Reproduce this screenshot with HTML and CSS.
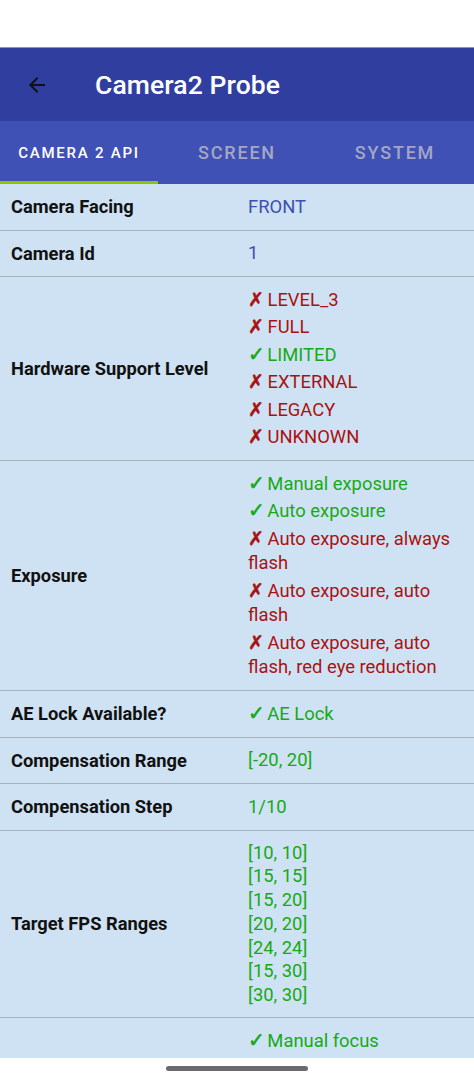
FILE: index.html
```html
<!DOCTYPE html>
<html>
<head>
<meta charset="utf-8">
<link rel="stylesheet" href="styles.css">
</head>
<body>
<div class="screen">
  <div class="status"></div>
  <header class="appbar">
    <svg class="back" width="24" height="24" viewBox="0 0 24 24"><path d="M20 11H7.83l5.59-5.59L12 4l-8 8 8 8 1.41-1.41L7.83 13H20v-2z" fill="#111"/></svg>
    <h1 class="title">Camera2 Probe</h1>
  </header>
  <nav class="tabs">
    <div class="tab active">CAMERA 2 API</div>
    <div class="tab">SCREEN</div>
    <div class="tab">SYSTEM</div>
  </nav>
  <main class="content">
    <div class="row">
      <div class="label">Camera Facing</div>
      <div class="value"><div class="item blue">FRONT</div></div>
    </div>
    <div class="row">
      <div class="label">Camera Id</div>
      <div class="value"><div class="item blue">1</div></div>
    </div>
    <div class="row">
      <div class="label">Hardware Support Level</div>
      <div class="value">
        <div class="item no"><span class="mk">✗</span> LEVEL_3</div>
        <div class="item no"><span class="mk">✗</span> FULL</div>
        <div class="item yes"><span class="mk">✓</span> LIMITED</div>
        <div class="item no"><span class="mk">✗</span> EXTERNAL</div>
        <div class="item no"><span class="mk">✗</span> LEGACY</div>
        <div class="item no"><span class="mk">✗</span> UNKNOWN</div>
      </div>
    </div>
    <div class="row">
      <div class="label">Exposure</div>
      <div class="value">
        <div class="item yes"><span class="mk">✓</span> Manual exposure</div>
        <div class="item yes"><span class="mk">✓</span> Auto exposure</div>
        <div class="item no"><span class="mk">✗</span> Auto exposure, always flash</div>
        <div class="item no"><span class="mk">✗</span> Auto exposure, auto flash</div>
        <div class="item no"><span class="mk">✗</span> Auto exposure, auto flash, red eye reduction</div>
      </div>
    </div>
    <div class="row">
      <div class="label">AE Lock Available?</div>
      <div class="value"><div class="item yes"><span class="mk">✓</span> AE Lock</div></div>
    </div>
    <div class="row">
      <div class="label">Compensation Range</div>
      <div class="value"><div class="item yes">[-20, 20]</div></div>
    </div>
    <div class="row">
      <div class="label">Compensation Step</div>
      <div class="value"><div class="item yes">1/10</div></div>
    </div>
    <div class="row fps">
      <div class="label">Target FPS Ranges</div>
      <div class="value">
        <div class="lines yes">[10, 10]<br>[15, 15]<br>[15, 20]<br>[20, 20]<br>[24, 24]<br>[15, 30]<br>[30, 30]</div>
      </div>
    </div>
    <div class="row">
      <div class="label"></div>
      <div class="value"><div class="item yes"><span class="mk">✓</span> Manual focus</div></div>
    </div>
  </main>
  <div class="navbar"><div class="pill"></div></div>
</div>
</body>
</html>
```

FILE: styles.css
```css
html, body {
  margin: 0;
  padding: 0;
  background: #ffffff;
}
.screen {
  width: 474px;
  height: 1080px;
  display: flex;
  flex-direction: column;
  overflow: hidden;
  font-family: Roboto, "Liberation Sans", sans-serif;
}
.status {
  height: 47px;
  flex: none;
  background: #ffffff;
}
.appbar {
  height: 74px;
  flex: none;
  background: #303f9f;
  border-top: 1px solid #8893c6;
  box-sizing: border-box;
  display: flex;
  align-items: center;
  padding-left: 25px;
}
.back {
  width: 24px;
  height: 24px;
  flex: none;
}
.title {
  margin: 0 0 0 46px;
  font-size: 26.5px;
  font-weight: 500;
  color: #ffffff;
  letter-spacing: 0.1px;
}
.tabs {
  height: 63px;
  flex: none;
  background: #3f51b5;
  display: grid;
  grid-template-columns: 1fr 1fr 1fr;
}
.tab {
  display: flex;
  align-items: center;
  justify-content: center;
  font-size: 18px;
  font-weight: 500;
  letter-spacing: 1.8px;
  color: #a4a6c4;
  box-sizing: border-box;
  padding-bottom: 1px;
}
.tab.active {
  font-size: 15px;
  letter-spacing: 1.75px;
  color: #ffffff;
  border-bottom: 3px solid #8bc400;
  padding-top: 3px;
  padding-bottom: 0;
}
.content {
  flex: 1;
  background: #cfe2f3;
  overflow: hidden;
}
.row {
  display: grid;
  grid-template-columns: 237px 237px;
  border-bottom: 1px solid #a9b1b9;
  padding: 9px 0;
}
.row.fps {
  padding: 10px 0;
}
.label {
  padding-left: 11px;
  font-size: 18.3px;
  font-weight: 700;
  color: #111111;
  display: flex;
  align-items: center;
}
.value {
  padding: 0 8px 0 11px;
  font-size: 18.4px;
  line-height: 24.5px;
}
.item {
  padding: 1.5px 0;
}
.lines {
  line-height: 23.8px;
}
.blue { color: #3f4fae; }
.yes { color: #16aa16; }
.no { color: #a81212; }
.mk {
  display: inline-block;
  font-family: "DejaVu Sans", sans-serif;
  font-weight: 700;
  font-size: 20px;
  line-height: 1;
  margin-right: -2px;
  -webkit-text-stroke: 0.6px currentColor;
}
.no .mk {
  font-weight: 400;
  font-size: 19px;
  margin-right: -1px;
  -webkit-text-stroke: 0.5px currentColor;
}
.navbar {
  height: 22px;
  flex: none;
  background: #ffffff;
  display: flex;
  justify-content: center;
  align-items: flex-start;
  padding-top: 8px;
  box-sizing: border-box;
}
.pill {
  width: 142px;
  height: 5px;
  border-radius: 3px;
  background: #6b6b6b;
}
```
